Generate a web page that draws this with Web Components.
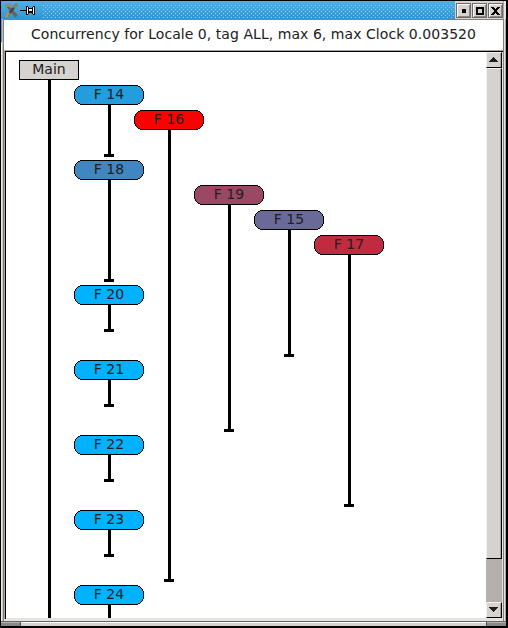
<!DOCTYPE html>
<html lang="en"><head><meta charset="utf-8"><title>Concurrency</title>
<style>html,body{margin:0;width:508px;height:628px;overflow:hidden;background:#fff}</style></head>
<body>
<app-window>
  <title-bar slot="title"></title-bar>
  <info-line slot="info">Concurrency for Locale 0, tag ALL, max 6, max Clock 0.003520</info-line>
  <task-graph slot="content"></task-graph>
  <scroll-bar slot="scroll"></scroll-bar>
</app-window>
<script>
const define=(name,html,init)=>customElements.define(name,class extends HTMLElement{
  constructor(){super();this.attachShadow({mode:'open'}).innerHTML=html}
  connectedCallback(){if(init)init(this,this.shadowRoot)}
});

define('window-button',`<style>
:host{display:block;box-sizing:border-box;width:15px;height:15px;flex:none;background:#d6d2d0;border:1px solid #6e6966;box-shadow:inset 1px 1px #fff,inset -1px -1px #8c8784}
svg{display:block;width:13px;height:13px}</style><svg viewBox="0 0 13 13" shape-rendering="crispEdges"></svg>`,(el,root)=>{
  root.querySelector('svg').innerHTML={
    min:'<path d="M5 5h4v4H5z"/>',
    max:'<path fill-rule="evenodd" d="M3 3h8v8H3zM5 5v4h4V5z"/>',
    close:'<path d="M2 3h3v1h1v1h1V4h1V3h3v1h-1v1H9v1H8v2h1v1h1v1h1v1H8v-1H7V9H6v1H5v1H2v-1h1V9h1V8h1V6H4V5H3V4H2z"/>'
  }[el.getAttribute('kind')];
});

define('title-bar',`<style>
:host{display:flex;height:18px;align-items:stretch;background:#3ba0dc}
svg{flex:none;width:42px;height:18px}
.grip{flex:1;height:18px;background:linear-gradient(#52b0e5,#2e96d3)}
.grip svg{display:block;width:100%;height:18px}
.buttons{display:flex;gap:1px;box-sizing:border-box;background:#d6d2d0;padding:2px 0 1px 1px}
</style>
<svg viewBox="0 0 42 18">
 <defs><linearGradient id="b" x2="0" y2="1"><stop stop-color="#52b0e5"/><stop offset="1" stop-color="#2e96d3"/></linearGradient></defs>
 <rect width="42" height="18" fill="url(#b)"/>
 <path d="M7 5L15.500 15.500" stroke="#66635c" stroke-width="3.4"/>
 <path d="M16 3L6 15" stroke="#4b473f" stroke-width="2.2"/>
 <path d="M4 5.500Q7 2.500 11 6" stroke="#8f8b80" stroke-width="3" fill="none"/>
 <path d="M8 11.500L5 16" stroke="#c78a48" stroke-width="2.6"/><path d="M13 7l3-4" stroke="#a8824f" stroke-width="2"/>
 <g shape-rendering="crispEdges"><path d="M19 9h6v1h-6z"/><path d="M25 5h2v1h1v1h3V6h1V5h2v9h-2v-1h-1v-1h-3v1h-1v1h-2z"/><path fill="#fff" d="M26 6h1v7h-1zM28 8h3v2h-3zM32 6h1v7h-1z"/></g>
</svg>
<div class="grip"><svg><defs><pattern id="dots" width="4" height="4" patternUnits="userSpaceOnUse"><path fill="#91cdf0" d="M2 2h1v1H2zM0 0h1v1H0z"/></pattern></defs><rect y="3" width="100%" height="14" fill="url(#dots)"/></svg></div>
<div class="buttons"><window-button kind="min"></window-button><window-button kind="max"></window-button><window-button kind="close"></window-button></div>`);

define('info-line',`<style>
:host{display:block;height:30px;text-align:center;background:#fff;color:#202020;font:14px/29px "DejaVu Sans",sans-serif;letter-spacing:.05px;white-space:nowrap}
</style><slot></slot>`);

// Width of the corner step for each pixel row of a rounded task label.
const insets=[6,4,3,2,1,1,0,0,0,0,0,0,0,0,1,1,2,3,4,6];
const rows=(list,from)=>list.map((n,y)=>`M${n} ${y+from}h${70-2*n}v1h${2*n-70}z`).join('');
const outer=rows(insets,0);
const inner=rows(insets.slice(1,-1).map((n,i)=>Math.max(n+1,insets[i],insets[i+2])),1);

define('task-node',`<style>
:host{position:absolute;width:70px;height:20px;color:#202020;font:14px/19px "DejaVu Sans",sans-serif;text-align:center}
:host([square]){width:60px}
svg{position:absolute;inset:0;width:100%;height:20px}
span{position:relative}
</style><svg shape-rendering="crispEdges"></svg><span><slot></slot></span>`,(el,root)=>{
  const fill=el.getAttribute('fill');
  root.querySelector('svg').innerHTML=el.hasAttribute('square')
    ?`<rect x=".5" y=".5" width="59" height="19" fill="${fill}" stroke="#000"/>`
    :`<path d="${outer}"/><path d="${inner}" fill="${fill}"/>`;
});

define('task-graph',`<style>
:host{display:block;position:relative;overflow:hidden;background:#fff}
i{position:absolute;width:3px;background:#000}
i.end::after{content:"";position:absolute;left:-4px;bottom:0;width:10px;height:3px;background:#000}
</style>`,(el,root)=>{
  const tasks=[['Main',19,60,620,'#d6d2d0'],['F 14',74,85,157,'#239ddd'],['F 16',134,110,582,'#ff0000'],
    ['F 18',74,160,282,'#4087c1'],['F 19',194,185,432,'#9c4764'],['F 15',254,210,357,'#6a6a98'],
    ['F 17',314,235,507,'#c12b3f'],['F 20',74,285,332,'#00b2ff'],['F 21',74,360,407,'#00b2ff'],
    ['F 22',74,435,482,'#00b2ff'],['F 23',74,510,557,'#00b2ff'],['F 24',74,585,630,'#00b2ff']];
  for(const [name,x,y,end,fill] of tasks){
    const square=name==='Main', line=document.createElement('i'), node=document.createElement('task-node');
    line.style.cssText=`left:${x-6+(square?29:34)}px;top:${y-52+19}px;height:${end-y-19}px`;
    if(!square)line.className='end';
    node.setAttribute('fill',fill);
    if(square)node.setAttribute('square','');
    node.style.cssText=`left:${x-6}px;top:${y-52}px`;
    node.textContent=name;
    root.append(line,node);
  }
});

define('scroll-bar',`<style>
:host{display:flex;flex-direction:column;width:16px;background:#b6b0ac}
div{box-sizing:border-box;background:#d6d2d0;border:solid;border-width:1px;border-color:#f4f2f1 #000 #000 #f4f2f1;box-shadow:inset -1px 0 #aaa5a1}
.arrow{height:16px;flex:none}.thumb{height:491px;flex:none}.gap{flex:1;background:none;border:0;box-shadow:none}
svg{display:block;width:14px;height:14px;fill:#202020}
</style><div class="arrow"><svg viewBox="0 0 14 14" shape-rendering="crispEdges"><path d="M6 4h1v1h1v1h1v1h1v1h1v1H2V8h1V7h1V6h1V5h1z"/></svg></div>
<div class="thumb"></div><div class="gap"></div>
<div class="arrow"><svg viewBox="0 0 14 14" shape-rendering="crispEdges"><path d="M2 4h9v1h-1v1H9v1H8v1H7v1H6V8H5V7H4V6H3V5H2z"/></svg></div>`);

define('app-window',`<style>
:host{display:grid;grid-template-rows:18px 1fr 5px;box-sizing:border-box;width:508px;height:628px;padding:1px 2px 2px 1px;background:#000}
.top{display:grid;padding-right:3px;background:linear-gradient(90deg,#52b0e5 50%,#aaa5a1 50%,#aaa5a1 calc(100% - 2px),#e6e3e1 0)}
.frame{display:grid;grid-template-rows:30px 1fr;min-height:0;box-sizing:border-box;padding:1px 3px 2px 3px;
 background:linear-gradient(#3ba0dc,#3ba0dc) 0 0/1px 23px no-repeat,linear-gradient(90deg,#f4f2f1 1px,#c8c3c0 1px 2px,#85807d 2px 3px,transparent 3px calc(100% - 3px),#85807d calc(100% - 3px) calc(100% - 2px),#e6e3e1 calc(100% - 2px) calc(100% - 1px),#aaa5a1 calc(100% - 1px)),linear-gradient(#85807d 1px,#e6e3e1 1px)}
.body{display:grid;grid-template-columns:1fr 16px;min-height:0;padding:2px 1px 1px 2px;background:#e6e3e1;box-shadow:inset 1px 1px #aaa5a1,inset 2px 2px #000}
.foot{display:grid;grid-template-columns:19px 1fr 19px;background:#555;gap:1px;border-top:1px solid #666;box-sizing:border-box}
.foot b{background:#d6d2d0;box-shadow:inset 0 1px #fff}
.foot b:not(:nth-child(2)){background:#8b8784;box-shadow:inset 0 1px #b6b0ac}
</style><div class="top"><slot name="title"></slot></div>
<div class="frame"><slot name="info"></slot><div class="body"><slot name="content"></slot><slot name="scroll"></slot></div></div>
<div class="foot"><b></b><b></b><b></b></div>`);
</script></body></html>
